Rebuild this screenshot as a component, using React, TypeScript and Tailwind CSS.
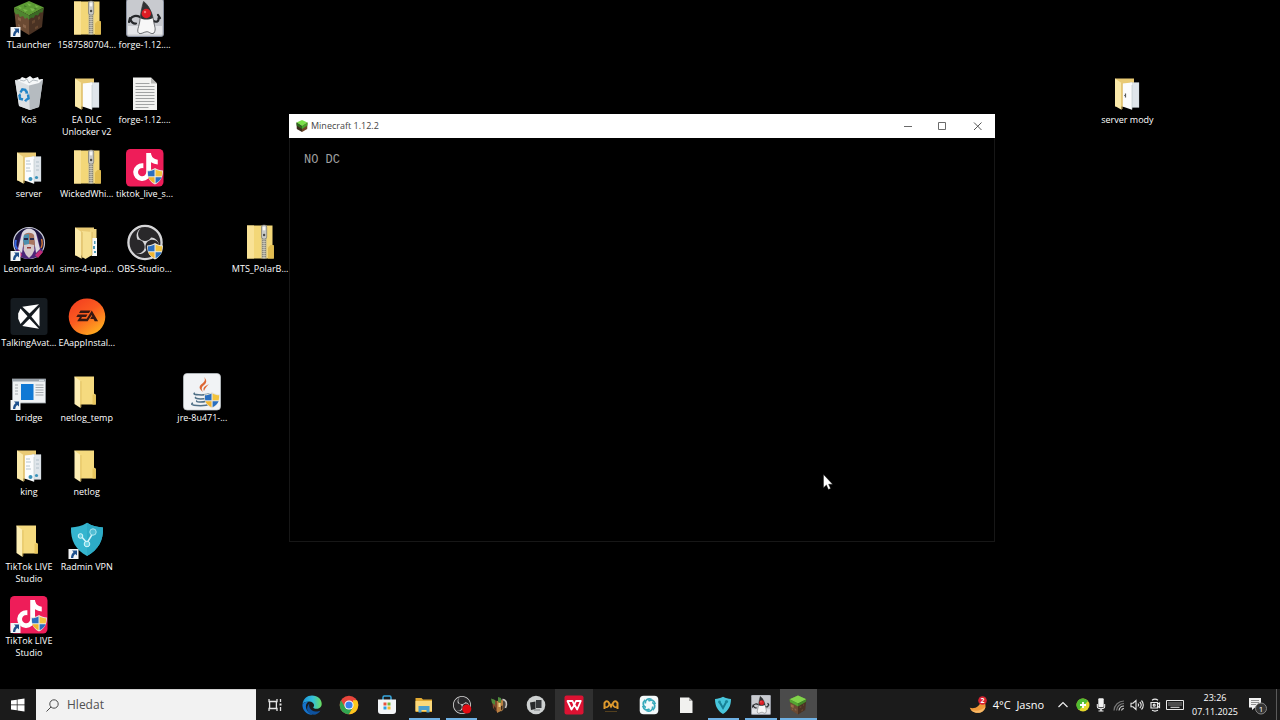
import type { ReactNode } from "react";
import { FaTiktok } from "react-icons/fa6";
import { SiObsstudio } from "react-icons/si";

/* ---------- overlays ---------- */

function ShortcutMark() {
  return (
    <g>
      <rect x=".5" y="27" width="10" height="10" fill="#f2f4f6" />
      <path d="M4 28.500h5v5l-1.700-1.600C6 33 5.400 34.200 5.300 36H3c0-2.600.9-4.500 2.600-6z" fill="#1d4f8c" />
    </g>
  );
}

function UacShield() {
  return (
    <g>
      <path d="M29 19c2.400 1.600 5 2.300 8 2.400 0 6.500-2.300 11-8 14.200-5.700-3.200-8-7.700-8-14.200 3-.1 5.600-.8 8-2.400z" fill="#e8e6dc" />
      <path d="M28.500 20.400v6.800h-6.300c-.2-1.600-.3-3.200-.3-4.900 2.400-.2 4.600-.8 6.600-1.900z" fill="#2a6fc0" />
      <path d="M29.600 20.400c2 1.100 4.100 1.700 6.500 1.900 0 1.700-.1 3.300-.4 4.900h-6.100z" fill="#f2c33c" />
      <path d="M22.400 28.300h6.100v6c-3.200-1.700-5.200-3.700-6.100-6z" fill="#f2b52e" />
      <path d="M29.600 28.300h6c-.9 2.300-2.900 4.400-6 6z" fill="#2a6fc0" />
    </g>
  );
}

/* ---------- desktop drawings, 38 x 38 ---------- */

function GrassBlock() {
  return (
    <g>
      <path d="M19 1 34 7.500 19 15.500 4 7.500z" fill="#5c9b34" />
      <path d="m8 6 4 2-2 1zM17 3l5 2-3 1zM20 8l6 1-4 2.500zM13 9l5 1-3 2zM25 5l4 2-3 .8z" fill="#79b94c" />
      <path d="m14 5 3 1.400-2.500 1zM24 8l3 .5-2 1.500z" fill="#44792a" />
      <path d="M4 7.500 19 15.500V35L6 27z" fill="#6b4a33" />
      <path d="M34 7.500 19 15.500V35l13-8z" fill="#4a3223" />
      <path d="m4 7.500 15 8v4.500l-2-2.500-2 1.500-2-3-3 1-1.500-3-2.500.5L4.300 12z" fill="#4f8530" />
      <path d="m34 7.500-15 8v4l2.500-2 2 .5 2-3 2.500.5 2-3 2.500 0z" fill="#3b6a25" />
      <path d="m8 17 3 1.600v3L8 20zM13 24l3 1.600v3L13 27zM8 24l2 1v2l-2-1z" fill="#89644a" />
      <path d="m22 21 3-1.600v3L22 24zM28 17l2-1v3l-2 1zM25 27l3-1.600v2.600l-3 1.600z" fill="#65462f" />
    </g>
  );
}

function ZipFolder() {
  return (
    <g>
      <path d="M6 1.500h25.500v20l1.300 1v12H6z" fill="#f3d778" />
      <path d="M6 1.500h7v33H6z" fill="#f9e296" />
      <path d="M27 23.500 29.500 21h3.300v13.500H27z" fill="#e2bd50" />
      <path d="M20.500 1.500h5v33h-5z" fill="#b9b49c" />
      <path d="M23 8v26.500" stroke="#6a6962" strokeWidth="3.200" strokeDasharray="1 1" />
      <path d="M23 8v26.500" stroke="#d6d5cd" strokeWidth="1" />
      <rect x="20.500" y="1" width="5.200" height="14" rx="2" fill="#c9cac8" stroke="#6c6c67" strokeWidth=".6" />
      <rect x="21.800" y="2.500" width="2.500" height="4" rx="1" fill="#f6f6f4" />
      <circle cx="23.100" cy="11" r="1.200" fill="#4b4b49" />
    </g>
  );
}

function PlainFolder() {
  return (
    <g>
      <path d="M6.500 3.500h19.500v17l1.800 1.500v9.500H12z" fill="#f5da7f" />
      <path d="M24.500 21.500 27.800 21.500v10h-3.300z" fill="#e8c65e" />
      <path d="M6.500 3.500 12.500 8v27L6.500 31z" fill="#fdeeb4" />
      <path d="M12.500 8v27l.8-1V8.300z" fill="#d9b551" />
    </g>
  );
}

function PaperFolder({ kind }: { kind: "blank" | "notes" | "closed" | "speck" }) {
  return (
    <g>
      <path d="M7 3.500h19v28H7z" fill="#e9ca74" />
      {kind === "closed" ? (
        <g>
          <path d="M22 5h6.500v26H22z" fill="#f0d684" />
          <path d="M24 14h5v18h-5z" fill="#f8fafb" />
          <path d="M26 17h1.500v3H26zM25 22h2v3h-2zM26 27h2v2h-2z" fill="#4f9bb5" />
          <path d="m14 7 10 1v23l-6.500 4L14 33z" fill="#f6e092" />
          <path d="M24 8v23" stroke="#d3ae53" strokeWidth=".7" />
        </g>
      ) : (
        <g>
          <path d="M22 7.500h9v25h-9z" fill="#dfe5ea" stroke="#bcc5cc" strokeWidth=".3" />
          <path d="M14.500 8.500 24 7.500v27.200l-9.500-3.200z" fill="#fbfcfd" />
          <path d="M24 10v24.500" stroke="#bac2c8" strokeWidth=".6" />
        </g>
      )}
      <path d="M7 3.500 13.500 8v26.700L7 31z" fill="#fae9aa" />
      <path d="M13.500 8v26.700l1-1.300V8.300z" fill="#d9b65c" />
      {kind === "notes" && (
        <g>
          <path d="M16 12h4M16 15h5M16 19h4M16 22h5M26 13h3M26 17h3M26 21h3" stroke="#a5b7c2" strokeWidth=".8" />
          <circle cx="20.500" cy="30" r="2" fill="#3b93bb" />
          <circle cx="26.500" cy="28.500" r="1.600" fill="#3b93bb" />
        </g>
      )}
      {kind === "speck" && <path d="M17.500 18.500v4M16.200 20.500h1.400" stroke="#5b5b5b" strokeWidth="1.200" />}
    </g>
  );
}

function TextPage() {
  return (
    <g>
      <path d="M7 2.500h18l6 6v26.500H7z" fill="#f3f3f1" />
      <path d="M25 2.500v6h6z" fill="#b8b8b5" />
      <path d="M9.500 8.500h14M9.500 11.500h19M9.500 14.500h19M9.500 17.500h19M9.500 20.500h19M9.500 23.500h19M9.500 26.500h19M9.500 29.500h19M9.500 32.500h13" stroke="#a2a4a4" strokeWidth="1" />
    </g>
  );
}

function DukeFigure() {
  return (
    <g>
      <rect x=".5" y="-1" width="37" height="37.500" rx="2.500" fill="#c8cacf" stroke="#8990a0" strokeWidth="1" />
      <path d="M2 26h34v8.500H2z" fill="#e4e5e8" />
      <path d="M14 17c-4-2-8-1-9.500 2 .5 3 3 5 5.500 4.500M26 20c4 3 7 2 6.500-2M4 18l-1 4M32 15l2 3" fill="none" stroke="#26282b" strokeWidth="2.200" strokeLinecap="round" />
      <path d="M17.500 1.500c4.500 3 9 11 10 19 .7 5.500 3 8.500.5 12.500-3 1.800-4.500-1.300-7-1.300-3 0-5.500 2.800-8 1.600-3-2 .3-7 .8-12.300.6-6 1.700-13 3.700-19.500z" fill="#f7f7f7" stroke="#34363a" strokeWidth=".7" />
      <path d="M17.500 1.500c4.700 3 8.300 10 9.500 16.500-4 2-9 2.200-12.800.3.600-5.500 1.700-11.800 3.300-16.800z" fill="#303234" />
      <circle cx="20.300" cy="13.500" r="4.700" fill="#de1c24" />
      <circle cx="19" cy="12" r="1.200" fill="#f37c7b" />
    </g>
  );
}

function RecycleBin() {
  return (
    <g>
      <path d="m5 5 13 3 15-4-4 28-9 3-11-4z" fill="#c9ced2" />
      <path d="m5 5 14 4 .8 26L9 31z" fill="#dde1e4" />
      <path d="m19 9 14-5-4 28-9.200 3z" fill="#b5bbc0" />
      <path d="m6 5 4-1 2-2 4 1.500L20 1l3 2.500L28 2l1 2.500 4-.5-4 4-10 2.500z" fill="#f6f8f9" />
      <path d="m10 5 4 1 3-2 2 4 4-3 5 1" stroke="#9aa3aa" strokeWidth=".7" fill="none" />
      <path d="m10.500 17.500 1.800-3.200 3 .6 1.200 2.300M18 19.500l.6 4-2.600 1.600M13 24.500l-3-.8-.6-3.700" fill="none" stroke="#2285c8" strokeWidth="2.400" />
      <path d="m15 18.500 3.500.2-1.200-3.500zM16.500 27.200v-3.800l-2.500 2.200zM8 20.500l3.300.7-1.200-3.200z" fill="#2285c8" />
    </g>
  );
}

function TikTokTile() {
  return (
    <g>
      <rect width="37.500" height="37.500" rx="4.500" fill="#ee1d59" />
      <FaTiktok x="5.500" y="4" size="28" color="#ffffff" />
    </g>
  );
}

function Portrait() {
  return (
    <g>
      <circle cx="19" cy="19" r="15.500" fill="#1d1740" stroke="#c7c9d6" strokeWidth="1.200" />
      <path d="M5 27c3-3 4-8 5-14 2-8 14-11 18 0 1 6 2 11 5 14-4 9-22 12-28 0z" fill="#4a2678" />
      <path d="M12 9c3-6 11-6 14 0l4 16-4 4-2-14H14l-2 14-4-4z" fill="#dcd8e0" />
      <path d="M14 11c2-3 8-3 10 0l1 10-2 6-4 5-4-5-2-6z" fill="#a87560" />
      <path d="M19 10v15l-4-1-2-8 1-5z" fill="#4b8fae" />
      <path d="M14 14h4v2h-4zM20 14h4v2h-4z" fill="#25264a" />
      <path d="m14 21 5-1 5 1 .5 5-2.500 5-3 3-3-3-2.500-5z" fill="#d5c9cb" />
      <path d="M17 23h4v1.500h-4z" fill="#943b38" />
      <path d="m25 31 5-5 3 2-5 6zM8 26l4 4-1 3-3-3z" fill="#c12c77" />
      <path d="M6 16c-1 3-1 6 1 9" stroke="#3768e7" strokeWidth="2" fill="none" />
      <path d="M31.500 15c1 3 1 6-.5 9" stroke="#d97a33" strokeWidth="1.400" fill="none" />
    </g>
  );
}

function ObsDisc() {
  return (
    <g>
      <circle cx="19" cy="18.500" r="17" fill="#29282a" stroke="#d6d6d8" strokeWidth="1.500" />
      <SiObsstudio x="2" y="1.500" size="34" color="#d6d6d8" />
    </g>
  );
}

function TalkingTile() {
  return (
    <g>
      <rect x=".5" width="37" height="37" rx="3" fill="#151b20" />
      <path d="M12.300 8.800 29 6.200 19.500 15.500z" fill="#fff" />
      <path d="m8.200 15.500 2.300-5 7 7.800-7 7.800-2.300-5.300z" fill="#fff" />
      <path d="M29.500 9v19.500L21.300 18.500z" fill="#fff" />
      <path d="m12.300 28 7.200-7.300 9.500 10z" fill="#fff" />
    </g>
  );
}

function EaDisc() {
  return (
    <g>
      <defs>
        <linearGradient id="eaFill" x1="0" y1="0" x2=".7" y2="1">
          <stop offset="0" stopColor="#f03a20" />
          <stop offset=".5" stopColor="#fb5a20" />
          <stop offset="1" stopColor="#ffad1f" />
        </linearGradient>
      </defs>
      <circle cx="19" cy="18.700" r="18.300" fill="url(#eaFill)" />
      <path d="M12.500 12.500h10l-1.500 2.600H11zM9.800 16.500h9.700L18 19h-4l-.9 1.700h5.600l5.100-8.200 6.300 10.700h-3.400L25.500 21h-3.300l1.400-2.500h.7l-.6-1.600-4.100 6.300H9.200l2.700-4.200H8.300z" fill="#371711" />
    </g>
  );
}

function BridgeWindow() {
  return (
    <g>
      <rect x="2.500" y="6" width="33" height="24" fill="#eff2f4" stroke="#979da2" strokeWidth=".8" />
      <path d="M2.500 6h33v2.500h-33z" fill="#9ca4ac" />
      <path d="M29 7.300h5" stroke="#e7eef3" strokeWidth="1" />
      <rect x="11" y="11" width="12.500" height="16" fill="#1179d4" />
      <path d="M5 12h3M5 15h3M5 18h3M5 21h3M25.500 12h8M25.500 14.500h8M25.500 17h8M25.500 19.500h8M25.500 22h8" stroke="#9da3a7" strokeWidth=".9" />
    </g>
  );
}

function JavaTile() {
  return (
    <g>
      <rect x=".5" y=".5" width="37" height="36.500" rx="3.500" fill="#f1f3f5" stroke="#c5cbd0" strokeWidth=".7" />
      <path d="M20 19c-5-4-4-6 0-9 2-2 2.600-3.500 1-6 4 4 2 6.500-.5 8.500-2.200 1.800-2.300 3.500-.5 6.500zM21 18c-1.500-3 0-4.500 5-7-3 3-3.500 4-5 7z" fill="#dd6734" />
      <path d="M12 20c-5 2 10 2.700 15 .7M13 24c-3 2 6 2.500 11 1M14 27.500c-2 1.800 5 2 9 .7M10 30c-6 2.500 11 4 17 1" fill="none" stroke="#517187" strokeWidth="1.500" />
    </g>
  );
}

function RadminShield() {
  return (
    <g>
      <path d="M19 .8c5.500 3.400 10.500 4.500 16 4.700.5 13-4.500 22-16 28.500C7.500 27.500 2.500 18.500 3 5.500 8.500 5.300 13.500 4.200 19 .8z" fill="#35b5cf" />
      <path d="M19 .8c5.500 3.400 10.500 4.500 16 4.700.5 13-4.500 22-16 28.500z" fill="#2dabc6" />
      <path d="m13 14 6 7 6-10" stroke="#d4f4fa" strokeWidth="1.500" fill="none" />
      <circle cx="12.500" cy="14" r="2.300" fill="#67cedf" stroke="#dcf8fc" strokeWidth="1" />
      <circle cx="19" cy="22" r="2.800" fill="#6bd1e3" stroke="#dcf8fc" strokeWidth="1" />
      <circle cx="25" cy="10" r="3.200" fill="#52bdd3" stroke="#a9e5ef" strokeWidth="1" />
    </g>
  );
}

/* ---------- desktop ---------- */

type DesktopItem = {
  label: string;
  cell: string;
  art: ReactNode;
  shortcut?: boolean;
  shield?: boolean;
};

const desktopItems: DesktopItem[] = [
  { label: "TLauncher", cell: "col-start-1 row-start-1", art: <GrassBlock />, shortcut: true },
  { label: "Koš", cell: "col-start-1 row-start-2", art: <RecycleBin /> },
  { label: "server", cell: "col-start-1 row-start-3", art: <PaperFolder kind="notes" /> },
  { label: "Leonardo.AI", cell: "col-start-1 row-start-4", art: <Portrait />, shortcut: true },
  { label: "TalkingAvat...", cell: "col-start-1 row-start-5", art: <TalkingTile /> },
  { label: "bridge", cell: "col-start-1 row-start-6", art: <BridgeWindow />, shortcut: true },
  { label: "king", cell: "col-start-1 row-start-7", art: <PaperFolder kind="notes" /> },
  { label: "TikTok LIVE Studio", cell: "col-start-1 row-start-8", art: <PlainFolder /> },
  { label: "TikTok LIVE Studio", cell: "col-start-1 row-start-9", art: <TikTokTile />, shortcut: true, shield: true },
  { label: "1587580704...", cell: "col-start-2 row-start-1", art: <ZipFolder /> },
  { label: "EA DLC Unlocker v2", cell: "col-start-2 row-start-2", art: <PaperFolder kind="blank" /> },
  { label: "WickedWhi...", cell: "col-start-2 row-start-3", art: <ZipFolder /> },
  { label: "sims-4-upd...", cell: "col-start-2 row-start-4", art: <PaperFolder kind="closed" /> },
  { label: "EAappInstal...", cell: "col-start-2 row-start-5", art: <EaDisc /> },
  { label: "netlog_temp", cell: "col-start-2 row-start-6", art: <PlainFolder /> },
  { label: "netlog", cell: "col-start-2 row-start-7", art: <PlainFolder /> },
  { label: "Radmin VPN", cell: "col-start-2 row-start-8", art: <RadminShield />, shortcut: true },
  { label: "forge-1.12....", cell: "col-start-3 row-start-1", art: <DukeFigure /> },
  { label: "forge-1.12....", cell: "col-start-3 row-start-2", art: <TextPage /> },
  { label: "tiktok_live_s...", cell: "col-start-3 row-start-3", art: <TikTokTile />, shield: true },
  { label: "OBS-Studio...", cell: "col-start-3 row-start-4", art: <ObsDisc />, shield: true },
  { label: "jre-8u471-...", cell: "col-start-4 row-start-6", art: <JavaTile />, shield: true },
  { label: "MTS_PolarB...", cell: "col-start-5 row-start-4", art: <ZipFolder /> },
  { label: "server mody", cell: "col-start-20 row-start-2", art: <PaperFolder kind="speck" /> },
];

function Desktop() {
  return (
    <ul className="grid h-full grid-cols-[repeat(22,minmax(0,1fr))] grid-rows-[repeat(9,minmax(0,1fr))] pr-2 pb-[18px]">
      {desktopItems.map((item) => (
        <li key={item.cell} className={item.cell}>
          <button type="button" className="flex w-full flex-col items-center gap-px">
            <svg viewBox="0 0 38 38" className="size-[38px] shrink-0" aria-hidden="true">
              {item.art}
              {item.shortcut && <ShortcutMark />}
              {item.shield && <UacShield />}
            </svg>
            <span
              className={`text-center text-[9px] leading-3 font-medium text-white ${
                item.label.endsWith("...") || item.label.length < 13 ? "whitespace-nowrap" : "px-1"
              }`}
            >
              {item.label}
            </span>
          </button>
        </li>
      ))}
    </ul>
  );
}

function GameWindow() {
  return (
    <section
      aria-label="Minecraft 1.12.2"
      className="absolute top-[114px] left-[289px] flex h-[428px] w-[706px] flex-col bg-black"
    >
      <header className="flex h-6 shrink-0 items-center bg-white pl-[7px] text-[#444]">
        <svg viewBox="0 0 12 12" className="size-3" aria-hidden="true">
          <path d="m6 0 5.500 2.500L6 6 .5 2.500z" fill="#7be04a" />
          <path d="M.5 2.500 6 6v6L.8 9z" fill="#3d2a1b" />
          <path d="M11.500 2.500 6 6v6l5.200-3z" fill="#6b4428" />
          <path d="m.5 2.500 5.500 3.500v3L.6 5.500z" fill="#2d6a1c" />
          <path d="M11.500 2.500 6 6v3l5.400-3.500z" fill="#48a329" />
        </svg>
        <h1 className="ml-[3px] text-[9px] leading-3">Minecraft 1.12.2</h1>
        <div className="ml-auto flex h-full">
          <button type="button" aria-label="Minimize" className="grid w-[35px] place-items-center">
            <svg viewBox="0 0 9 9" className="size-[9px]" fill="none" stroke="#6a6a6a"><path d="M1 4.500h8" /></svg>
          </button>
          <button type="button" aria-label="Maximize" className="grid w-[35px] place-items-center">
            <svg viewBox="0 0 9 9" className="size-[9px]" fill="none" stroke="#6a6a6a"><path d="M.5.500h7v7h-7z" /></svg>
          </button>
          <button type="button" aria-label="Close" className="grid w-[35px] place-items-center">
            <svg viewBox="0 0 9 9" className="size-[9px]" fill="none" stroke="#555"><path d="m1 .5 7.500 7.500M8.500.500 1 8" /></svg>
          </button>
        </div>
      </header>
      <p className="flex-1 border border-t-0 border-[#171717] px-3.5 pt-3.5 font-['Liberation_Mono',monospace] text-xs leading-4 text-[#a0a0a0]">
        NO DC
      </p>
    </section>
  );
}

/* ---------- taskbar drawings, 20 x 20 ---------- */

const taskView = (
  <g fill="none" stroke="#e4e4e4" strokeWidth="1.300">
    <path d="M4 4v2.500h8V4M4 16v-2.500h8V16M4.600 6.500v7M11.400 6.500v7M15.500 4v3M15.500 12v4" />
    <path d="M14.500 9.500h2" strokeWidth="2" />
  </g>
);

const edge = (
  <g>
    <defs>
      <linearGradient id="edgeTop" x1="0" x2="1">
        <stop offset="0" stopColor="#1a91dc" />
        <stop offset=".55" stopColor="#35c1d8" />
        <stop offset="1" stopColor="#6ade5d" />
      </linearGradient>
    </defs>
    <path d="M.5 9C1.200 3.800 5.200.4 10 .4c6 0 9.700 4 9.700 8.300 0 3.200-2.400 5.100-5.200 5.100-2.300 0-3.200-.8-3.200-1.300 0-.6.8-.8.8-2.200 0-2-2-3.900-5-3.900C4.500 6.400 2 7 .5 9z" fill="url(#edgeTop)" />
    <path d="M.4 9.400C2 7 4.500 6.300 7 6.400c-2.300 1-3.500 3.400-3 6.200.6 3.600 3.500 6.300 7 7C5 20.300.2 15.500.4 9.400z" fill="#1573cb" />
    <path d="M7.600 8c-1.500 3 .4 8.600 6.500 8.500 1.900 0 3.400-.6 4.400-1.100-1.500 2.700-4.400 4.500-7.500 4.200-5.500-.5-8.200-6.600-3.400-11.600z" fill="#0e529f" />
  </g>
);

const chrome = (
  <g>
    <circle cx="10" cy="10" r="9.300" fill="#e8453b" />
    <path d="M1.950 5.350A9.300 9.300 0 0 0 10 19.300l4-7-4 2-4-2z" fill="#31a650" />
    <path d="M18.050 5.350A9.300 9.300 0 0 1 10 19.300l4-7V5.350z" fill="#fbc71e" />
    <circle cx="10" cy="10" r="4.600" fill="#fff" />
    <circle cx="10" cy="10" r="3.600" fill="#3980ec" />
  </g>
);

const store = (
  <g>
    <path d="M6 5V2.500c0-1 .5-1.500 1.300-1.500h5.400c.8 0 1.300.5 1.300 1.500V5" fill="none" stroke="#37a8e0" strokeWidth="1.500" />
    <path d="M1 4.500h18V16c0 2-1 3-3 3H4c-2 0-3-1-3-3z" fill="#f3f5f7" />
    <path d="M6.500 7.500h3v3h-3z" fill="#e8523e" />
    <path d="M10.500 7.500h3v3h-3z" fill="#79b73a" />
    <path d="M6.500 11.500h3v3h-3z" fill="#2a9fe2" />
    <path d="M10.500 11.500h3v3h-3z" fill="#f4b82d" />
  </g>
);

const explorer = (
  <g>
    <path d="M1.500 3h6L9 4.500h9V17H1.500z" fill="#e2aa33" />
    <path d="M1.500 6H18v10H1.500z" fill="#fcd97a" />
    <path d="M4.500 17.500v-6.500h11v6.500h-3V15h-5v2.500z" fill="#4c9fcd" />
  </g>
);

const obsSmall = (
  <g>
    <circle cx="10" cy="10" r="9" fill="#29282a" />
    <SiObsstudio x="1" y="1" size="18" color="#d8d8d8" />
    <circle cx="14.800" cy="14" r="4.500" fill="#e30b13" />
  </g>
);

const chest = (
  <g>
    <path d="M12 4c5-1 7 3 5.500 7.500L12 17z" fill="#4b443e" />
    <path d="M13.500 4.500c4 .3 5 4.500 3 8.500" fill="none" stroke="#c9c7c2" strokeWidth="1.600" />
    <path d="m3 4 5 2v11l-4-4z" fill="#7e4a2d" />
    <path d="M8 6l6-1v10l-6 3z" fill="#b98042" />
    <path d="M2 3.500 6 5v5L3 8zM9 2l3 1v5l-3-1z" fill="#4d8a3b" />
    <path d="M9.500 8h2v4h-2z" fill="#e8cf8c" />
    <path d="m5 11 2 2v3l-2-2zM12 11l1.500-.5v4L12 15z" fill="#382719" />
  </g>
);

const cards = (
  <g>
    <circle cx="10" cy="10" r="9.300" fill="#cdd0d0" />
    <path d="m4 7.500 5.500-1v7.500L5 15z" fill="#27292b" />
    <path d="M10 5h5.500v8H10z" fill="#34373a" />
    <path d="M8 15h6" stroke="#787c7e" strokeWidth="1" />
  </g>
);

const wps = (
  <g>
    <rect x=".5" y=".5" width="19" height="19" rx="2" fill="#dc1232" />
    <path d="M3.500 6h5l1.700 4.200L12 6h4.800l-3.600 8.500-2.700-4.700-3 4.700z" fill="none" stroke="#fff" strokeWidth="1.800" strokeLinejoin="round" />
  </g>
);

const gold = (
  <g fill="none" stroke="#df9a2d" strokeWidth="2">
    <path d="M3.500 14V8C5 5.500 7 6 8 8l2 3.500L12 8c1-2 3-2.500 4.500 0v6" />
    <path d="M3.500 11.500c2 1.500 4 .5 4.500-2M16.500 11.500c-2 1.500-4 .5-4.500-2" strokeWidth="1.500" />
    <path d="M4 16.500h12" stroke="#54401e" strokeWidth="1" />
  </g>
);

const swirl = (
  <g>
    <rect x=".7" y=".7" width="18.600" height="18.600" rx="4" fill="#f4fafb" />
    <g fill="none" stroke="#37aabc" strokeWidth="1.700">
      {[0, 60, 120, 180, 240, 300].map((angle) => (
        <path key={angle} d="M6.300 8.500C6 5 8.500 3 12.500 4.200" transform={`rotate(${angle} 10 10)`} />
      ))}
    </g>
  </g>
);

const page = (
  <g>
    <path d="M4 2.500h9l3.500 3.500v12H4z" fill="#f1f1ef" />
    <path d="M13 2.500V6h3.500z" fill="#a6a6a4" />
  </g>
);

const vpn = (
  <g>
    <path d="M10 1.800c3 1.500 5 2 8 2.200 0 7-2.500 11.500-8 15C4.500 15.500 2 11 2 4c3-.2 5-.7 8-2.200z" fill="#48c6dc" />
    <path d="m6.500 7 3.500 6 3.500-6.500" fill="none" stroke="#187f95" strokeWidth="2" />
    <circle cx="6.500" cy="7" r="1.400" fill="#1b899d" />
    <circle cx="13.500" cy="6.500" r="1.600" fill="#1b899d" />
  </g>
);

const duke = (
  <svg x="0" y="0" width="20" height="20" viewBox="0 -1 38 38">
    <DukeFigure />
  </svg>
);

const grass = (
  <svg x="0" y="0" width="20" height="20" viewBox="1 0 36 36">
    <GrassBlock />
    <path d="M19 1 34 7.500 19 15.500 4 7.500z" fill="#81d24b" />
    <path d="m4 7.500 15 8v5L4.500 12z" fill="#55a532" />
    <path d="m34 7.500-15 8v5l14.500-8.500z" fill="#438729" />
    <path d="m6 16 5 3v5l-5-3z" fill="#9c6a48" />
  </svg>
);

type Task = { name: string; art: ReactNode; state?: "open" | "hover" | "active" };

const tasks: Task[] = [
  { name: "Task View", art: taskView },
  { name: "Microsoft Edge", art: edge },
  { name: "Google Chrome", art: chrome },
  { name: "Microsoft Store", art: store },
  { name: "File Explorer", art: explorer, state: "open" },
  { name: "OBS Studio", art: obsSmall, state: "open" },
  { name: "Modpack launcher", art: chest },
  { name: "Cards", art: cards },
  { name: "WPS Office", art: wps, state: "hover" },
  { name: "Metal", art: gold },
  { name: "Assistant", art: swirl },
  { name: "Document", art: page },
  { name: "Radmin VPN", art: vpn, state: "open" },
  { name: "Java", art: duke, state: "open" },
  { name: "Minecraft", art: grass, state: "active" },
];

const taskTone = { open: "", hover: "bg-[#303030]", active: "bg-[#4b4b4b]" };

function Taskbar() {
  return (
    <footer className="flex h-[31px] shrink-0 items-stretch bg-[#1b1b1b] text-white">
      <button type="button" aria-label="Start" className="grid w-9 place-items-center">
        <svg viewBox="0 0 14 14" className="size-3.5" fill="#fff" aria-hidden="true">
          <path d="M0 2.500 5.800 1.700v4.900H0zM6.500 1.600 13.500.5v6.100h-7zM0 7.300h5.800v4.900L0 11.400zM6.500 7.300h7v6.200l-7-1.100z" />
        </svg>
      </button>
      <label className="flex w-[220px] items-center gap-2 border-t border-[#d0d0d0] bg-[#f2f2f2] px-2.5">
        <svg viewBox="0 0 13 13" className="size-[13px] shrink-0" fill="none" stroke="#4a4a4a" strokeWidth="1" aria-hidden="true">
          <circle cx="8" cy="5" r="4.200" />
          <path d="M5 8 .5 12.500" />
        </svg>
        <input
          type="text"
          aria-label="Hledat"
          placeholder="Hledat"
          className="w-full min-w-0 bg-transparent text-xs leading-4 outline-none placeholder:text-[#505050]"
        />
      </label>
      <nav className="grid w-[561px] grid-cols-[repeat(15,minmax(0,1fr))]" aria-label="Apps">
        {tasks.map((task) => (
          <button
            key={task.name}
            type="button"
            aria-label={task.name}
            className={`relative grid place-items-center ${task.state ? taskTone[task.state] : ""}`}
          >
            <svg viewBox="0 0 20 20" className="size-5" aria-hidden="true">
              {task.art}
            </svg>
            {(task.state === "open" || task.state === "active") && (
              <span
                className={`absolute bottom-0 h-0.5 bg-[#6fb1e4] ${task.state === "active" ? "inset-x-0" : "inset-x-[3px]"}`}
              />
            )}
          </button>
        ))}
      </nav>

      <div className="ml-auto flex items-center">
        <button type="button" className="flex items-center gap-1.5 text-[11px] leading-4">
          <svg viewBox="0 0 18 18" className="size-[18px]" aria-hidden="true">
            <path d="M12.500 3c2 1.500 4.500 4 4 7.500-.7 4.500-5 7-9.500 6.200-3.200-.5-5.400-2.400-6.200-4.900 5 1.300 10.500-.8 11.700-8.800z" fill="#f0993a" />
            <path d="M16.500 10.500c-.7 4.500-5 7-9.500 6.200-2-.3-3.800-1.300-5-2.700 6 1.800 11.500 0 14.500-3.500z" fill="#f6b866" />
            <circle cx="13.500" cy="4.500" r="4.300" fill="#d92432" />
            <text x="13.500" y="7" textAnchor="middle" fontSize="7" fontWeight="700" fill="#fff">2</text>
          </svg>
          <span className="whitespace-pre">4°C  Jasno</span>
        </button>
        <div className="ml-3 flex items-center gap-1">
          <button type="button" aria-label="Show hidden icons" className="mr-0.5">
            <svg viewBox="0 0 14 14" className="size-3.5" fill="none" stroke="#eee" strokeWidth="1.200"><path d="m2.500 9 4.500-4.500L11.500 9" /></svg>
          </button>
          <button type="button" aria-label="Protection">
            <svg viewBox="0 0 14 14" className="size-3.5">
              <circle cx="7" cy="7" r="6.500" fill="#e4d72c" />
              <path d="M7 .5a6.500 6.500 0 0 0-4 11.600L12 3A6.500 6.500 0 0 0 7 .5z" fill="#4fbc32" />
              <path d="M7 4v6M4 7h6" stroke="#fff" strokeWidth="1.800" />
            </svg>
          </button>
          <button type="button" aria-label="Microphone">
            <svg viewBox="0 0 14 14" className="size-3.5" fill="#f2f2f2">
              <rect x="4.300" y=".3" width="5.400" height="9" rx="1" />
              <path d="M2.800 6v2.500C2.800 10.300 4.500 11.200 6.300 11.200v1.300H4.500v1h5v-1H7.700v-1.300c1.800 0 3.500-.9 3.500-2.700V6h-1v2.500C10.200 9.800 9 10.200 7 10.200s-3.200-.4-3.200-1.700V6z" />
            </svg>
          </button>
          <button type="button" aria-label="Network">
            <svg viewBox="0 0 14 14" className="size-3.5" fill="none" strokeWidth="1.200">
              <path d="M2 12.500A10 10 0 0 1 12 3M4.500 12.500A7.500 7.500 0 0 1 12 5.500" stroke="#777" />
              <path d="M7 12.500a5 5 0 0 1 5-4.500M9.500 12.500a2.500 2.500 0 0 1 2.500-2" stroke="#ccc" />
            </svg>
          </button>
          <button type="button" aria-label="Volume">
            <svg viewBox="0 0 14 14" className="size-3.5" fill="none" stroke="#e8e8e8" strokeWidth="1.100">
              <path d="M1 5.200h2L6 2.500v9L3 8.800H1zM8 5.500c.8.900.8 2.100 0 3M9.800 4c1.600 1.700 1.600 4.300 0 6M11.500 2.500c2.400 2.500 2.400 6.500 0 9" />
            </svg>
          </button>
          <button type="button" aria-label="Camera">
            <svg viewBox="0 0 14 14" className="size-3.5" fill="none" stroke="#e8e8e8" strokeWidth="1.200">
              <path d="M4 2.200c2-1.300 4-1.300 6 0M4 12.300c2 1 4 1 6 0M3 4.500h6.500v5.500H3zM9.500 6.200 11.500 5v4.500l-2-1.200" />
              <circle cx="6.200" cy="7.200" r="1" />
            </svg>
          </button>
          <button type="button" aria-label="Keyboard">
            <svg viewBox="0 0 18 12" className="h-3 w-[18px]" fill="none" stroke="#e8e8e8">
              <path d="M.5 1.500h17v9H.5z" />
              <path d="M2.500 4h13M2.500 6h13" strokeDasharray="1 1" />
              <path d="M4.500 8.300h9" />
            </svg>
          </button>
        </div>
        <time dateTime="2025-11-07T23:26" className="ml-2 flex flex-col items-center text-[9px] leading-[14px]">
          <span>23:26</span>
          <span>07.11.2025</span>
        </time>
        <button type="button" aria-label="Notifications" className="ml-2.5">
          <svg viewBox="0 0 20 20" className="size-5" aria-hidden="true">
            <path d="M1 3h12v9.500H7L4 15v-2.500H1z" fill="#f1f1f1" />
            <path d="M3 5.500h8M3 7.500h8M3 9.500h5" stroke="#777" strokeWidth=".8" />
            <circle cx="13" cy="13.500" r="5.500" fill="#343434" stroke="#858585" strokeWidth="1" />
            <text x="13" y="16.500" textAnchor="middle" fontSize="8" fill="#fff">1</text>
          </svg>
        </button>
        <button type="button" aria-label="Show desktop" className="ml-2 h-[31px] w-1 border-l border-[#5a5a5a]" />
      </div>
    </footer>
  );
}

export default function App() {
  return (
    <div className="flex h-screen flex-col overflow-hidden bg-black font-['Open_Sans','Noto_Sans',sans-serif]">
      <main className="relative min-h-0 flex-1">
        <Desktop />
        <GameWindow />
        <svg viewBox="0 0 12 18" className="absolute top-[474px] left-[823px] h-[18px] w-3" aria-hidden="true">
          <path d="M.5.500v13.200l2.900-2.800 2 4.600 2.200-1-2-4.300h4z" fill="#fff" stroke="#111" strokeWidth=".4" />
        </svg>
      </main>
      <Taskbar />
    </div>
  );
}
